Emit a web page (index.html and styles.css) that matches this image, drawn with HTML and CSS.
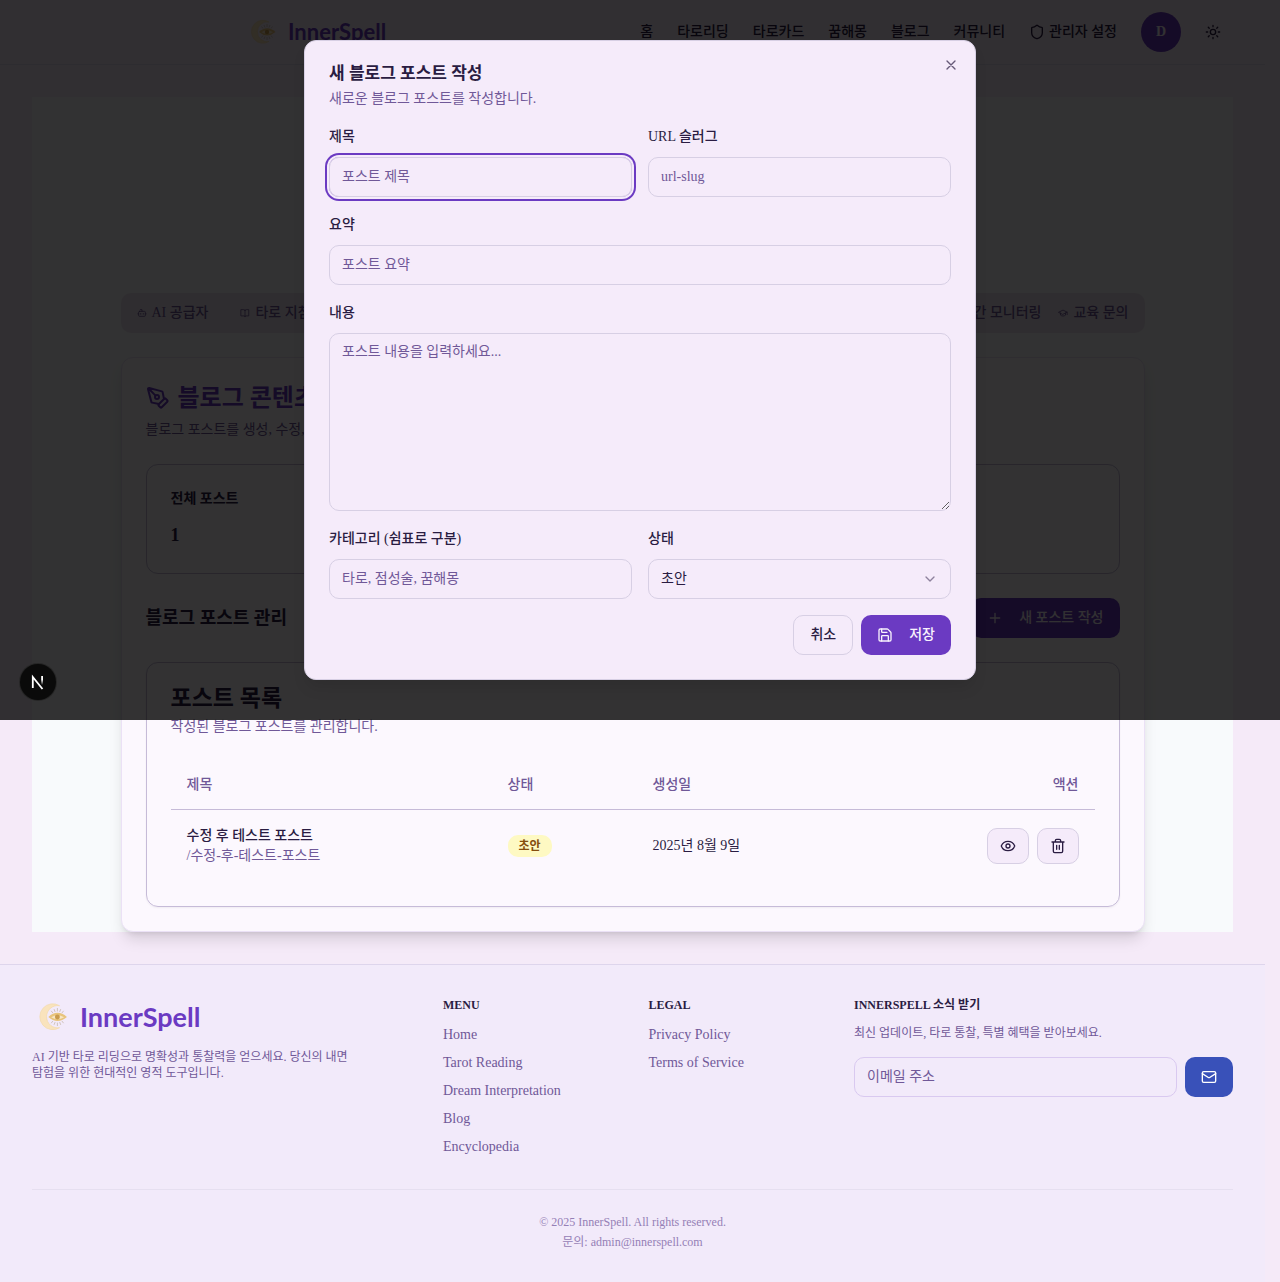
FILE: index.html
```html
<!DOCTYPE html>
<html lang="ko">
<head>
<meta charset="utf-8">
<meta name="viewport" content="width=device-width, initial-scale=1">
<title>InnerSpell</title>
<link rel="stylesheet" href="styles.css">
</head>
<body>
<svg class="defs" aria-hidden="true">
  <symbol id="logo" viewBox="0 0 32 32">
    <path d="M21 6A11.500 11.500 0 1 0 21 25.500A9.900 9.900 0 1 1 21 6Z" fill="#f9e3bd" stroke="#f3d9a8" stroke-width=".6"/>
    <path d="M19 8v3M16 9l1 2.500M22 9l-1 2.500M13.500 10.500l1.500 2M24.500 10.500l-1.500 2M19 21v3M16 23l1-2.500M22 23l-1-2.500M13.500 21.500l1.500-2M24.500 21.500l-1.500-2" stroke="#cdbfb4" stroke-width=".8" fill="none"/>
    <path d="M11 16Q19 8.500 27.500 16Q19 23 11 16Z" fill="#e8c47c"/>
    <path d="M13.500 16.200Q19 12.500 25 16.200Q19 19.500 13.500 16.200Z" fill="#f7e6c4"/>
    <circle cx="19" cy="16" r="2.200" fill="#c99b4d"/>
  </symbol>
</svg>

<header class="topbar">
  <a class="brand" href="#"><svg class="brand-mark" aria-hidden="true"><use href="#logo"/></svg><span>InnerSpell</span></a>
  <nav class="topnav">
    <a href="#">홈</a><a href="#">타로리딩</a><a href="#">타로카드</a><a href="#">꿈해몽</a><a href="#">블로그</a><a href="#">커뮤니티</a>
    <a href="#" class="with-icon"><svg class="icon" viewBox="0 0 24 24"><path d="M20 13c0 5-3.500 7.500-7.660 8.950a1 1 0 0 1-.67-.01C7.500 20.500 4 18 4 13V6a1 1 0 0 1 1-1c2 0 4.500-1.200 6.240-2.720a1.170 1.170 0 0 1 1.520 0C14.510 3.810 17 5 19 5a1 1 0 0 1 1 1z"/></svg>관리자 설정</a>
  </nav>
  <button class="avatar" type="button">D</button>
  <button class="theme" type="button" aria-label="테마"><svg class="icon" viewBox="0 0 24 24"><circle cx="12" cy="12" r="4"/><path d="M12 2v2M12 20v2M4.930 4.930l1.410 1.410M17.660 17.660l1.410 1.410M2 12h2M20 12h2M6.340 17.660l-1.410 1.410M19.070 4.930l-1.410 1.410"/></svg></button>
</header>

<main class="page">
  <div class="panel">
    <div class="inner">
      <div class="tabs">
        <div class="tab-group">
          <button type="button" class="tab"><svg class="icon tiny" viewBox="0 0 24 24"><path d="M12 8V4H8M2 14h2M20 14h2M15 13v2M9 13v2"/><rect x="4" y="8" width="16" height="12" rx="2"/></svg>AI 공급자</button>
          <button type="button" class="tab"><svg class="icon tiny" viewBox="0 0 24 24"><path d="M12 5v16M3 4h6a3 3 0 0 1 3 3 3 3 0 0 1 3-3h6v15h-7a2 2 0 0 0-2 2 2 2 0 0 0-2-2H3z"/></svg>타로 지침</button>
        </div>
        <div class="tab-group right">
          <button type="button" class="tab">실시간 모니터링</button>
          <button type="button" class="tab"><svg class="icon tiny" viewBox="0 0 24 24"><path d="M2 10l10-5 10 5-10 5zM22 10v6M6 12v5c3 3 9 3 12 0v-5"/></svg>교육 문의</button>
        </div>
      </div>

      <section class="card">
        <h1 class="card-title"><svg class="icon large" viewBox="0 0 24 24"><path d="M15.707 21.293a1 1 0 0 1-1.414 0l-1.586-1.586a1 1 0 0 1 0-1.414l5.586-5.586a1 1 0 0 1 1.414 0l1.586 1.586a1 1 0 0 1 0 1.414z"/><path d="m18 13-1.375-6.874a1 1 0 0 0-.746-.776L3.235 2.028a1 1 0 0 0-1.207 1.207L5.350 15.879a1 1 0 0 0 .776.746L13 18M2.300 2.300l7.286 7.286"/><circle cx="11" cy="11" r="2"/></svg>블로그 콘텐츠 관리</h1>
        <p class="muted">블로그 포스트를 생성, 수정, 삭제하고 관리합니다.</p>

        <div class="stat">
          <h2>전체 포스트</h2>
          <p>1</p>
        </div>

        <div class="toolbar">
          <h2>블로그 포스트 관리</h2>
          <button type="button" class="btn primary"><svg class="icon" viewBox="0 0 24 24"><path d="M5 12h14M12 5v14"/></svg>새 포스트 작성</button>
        </div>

        <div class="list">
          <h2>포스트 목록</h2>
          <p class="muted">작성된 블로그 포스트를 관리합니다.</p>
          <table>
            <thead><tr><th class="col-title">제목</th><th class="col-state">상태</th><th>생성일</th><th class="end">액션</th></tr></thead>
            <tbody><tr>
              <td><div class="post">수정 후 테스트 포스트</div><div class="slug">/수정-후-테스트-포스트</div></td>
              <td><span class="badge">초안</span></td>
              <td>2025년 8월 9일</td>
              <td><div class="actions">
                <button type="button" class="btn-icon" aria-label="보기"><svg class="icon" viewBox="0 0 24 24"><path d="M2.062 12.348a1 1 0 0 1 0-.696 10.750 10.750 0 0 1 19.876 0 1 1 0 0 1 0 .696 10.750 10.750 0 0 1-19.876 0"/><circle cx="12" cy="12" r="3"/></svg></button>
                <button type="button" class="btn-icon" aria-label="삭제"><svg class="icon" viewBox="0 0 24 24"><path d="M3 6h18M19 6v14a2 2 0 0 1-2 2H7a2 2 0 0 1-2-2V6M8 6V4a2 2 0 0 1 2-2h4a2 2 0 0 1 2 2v2M10 11v6M14 11v6"/></svg></button>
              </div></td>
            </tr></tbody>
          </table>
        </div>
      </section>
    </div>
  </div>
</main>

<footer class="footer">
  <div class="foot-grid">
    <div class="wide">
      <a class="brand big" href="#"><svg class="brand-mark" aria-hidden="true"><use href="#logo"/></svg><span>InnerSpell</span></a>
      <p class="about">AI 기반 타로 리딩으로 명확성과 통찰력을 얻으세요. 당신의 내면 탐험을 위한 현대적인 영적 도구입니다.</p>
    </div>
    <div>
      <h3>MENU</h3>
      <ul><li><a href="#">Home</a></li><li><a href="#">Tarot Reading</a></li><li><a href="#">Dream Interpretation</a></li><li><a href="#">Blog</a></li><li><a href="#">Encyclopedia</a></li></ul>
    </div>
    <div>
      <h3>LEGAL</h3>
      <ul><li><a href="#">Privacy Policy</a></li><li><a href="#">Terms of Service</a></li></ul>
    </div>
    <div class="wide">
      <h3>INNERSPELL 소식 받기</h3>
      <p class="small">최신 업데이트, 타로 통찰, 특별 혜택을 받아보세요.</p>
      <form class="subscribe">
        <input class="input" type="email" placeholder="이메일 주소" aria-label="이메일 주소">
        <button type="button" class="mail" aria-label="구독"><svg class="icon" viewBox="0 0 24 24"><rect x="2" y="4" width="20" height="16" rx="2"/><path d="m22 7-8.970 5.700a1.940 1.940 0 0 1-2.060 0L2 7"/></svg></button>
      </form>
    </div>
  </div>
  <div class="legal">
    <p>© 2025 InnerSpell. All rights reserved.</p>
    <p>문의: admin@innerspell.com</p>
  </div>
</footer>

<div class="overlay">
  <div class="modal" role="dialog" aria-labelledby="dlg-title">
    <button type="button" class="close" aria-label="닫기"><svg class="icon" viewBox="0 0 24 24"><path d="M18 6 6 18M6 6l12 12"/></svg></button>
    <h2 id="dlg-title">새 블로그 포스트 작성</h2>
    <p class="muted">새로운 블로그 포스트를 작성합니다.</p>
    <form class="form">
      <div class="row">
        <div class="field"><label for="f-title">제목</label><input class="input active" id="f-title" placeholder="포스트 제목"></div>
        <div class="field"><label for="f-slug">URL 슬러그</label><input class="input" id="f-slug" placeholder="url-slug"></div>
      </div>
      <div class="field"><label for="f-sum">요약</label><input class="input" id="f-sum" placeholder="포스트 요약"></div>
      <div class="field"><label for="f-body">내용</label><textarea class="input" id="f-body" rows="8" placeholder="포스트 내용을 입력하세요..."></textarea></div>
      <div class="row">
        <div class="field"><label for="f-cat">카테고리 (쉼표로 구분)</label><input class="input" id="f-cat" placeholder="타로, 점성술, 꿈해몽"></div>
        <div class="field"><label for="f-state">상태</label>
          <div class="select"><select class="input" id="f-state"><option>초안</option></select><svg class="icon" viewBox="0 0 24 24"><path d="m6 9 6 6 6-6"/></svg></div>
        </div>
      </div>
      <div class="form-actions">
        <button type="button" class="btn outline">취소</button>
        <button type="button" class="btn primary"><svg class="icon" viewBox="0 0 24 24"><path d="M15.200 3a2 2 0 0 1 1.400.6l3.800 3.800a2 2 0 0 1 .6 1.400V19a2 2 0 0 1-2 2H5a2 2 0 0 1-2-2V5a2 2 0 0 1 2-2z"/><path d="M17 21v-7a1 1 0 0 0-1-1H8a1 1 0 0 0-1 1v7M7 3v4a1 1 0 0 0 1 1h7"/></svg>저장</button>
      </div>
    </form>
  </div>
  <button type="button" class="devtools" aria-label="Next.js"><svg viewBox="0 0 36 36"><defs><linearGradient id="fade" x1="0" y1="0" x2="0" y2="1"><stop offset=".4" stop-color="#fff"/><stop offset="1" stop-color="#fff" stop-opacity="0"/></linearGradient></defs><path d="M12.800 24V13L22.500 25" fill="none" stroke="#fff" stroke-width="1.800"/><rect x="21.200" y="12" width="1.800" height="9" fill="url(#fade)"/></svg></button>
</div>
</body>
</html>
```
FILE: styles.css
```css
:root {
  --bg: #f5eaf8;
  --surface: #f5ebfa;
  --ink: #2a1c42;
  --muted: #705898;
  --purple: #6b3ac2;
  --line: #d7cfe4;
}
* { box-sizing: border-box; }
body {
  margin: 0;
  padding-right: 15px;
  position: relative;
  background: var(--bg);
  color: var(--ink);
  font: 14px/20px "Liberation Serif", "Noto Sans CJK KR", serif;
}
h1, h2, h3, p, ul { margin: 0; padding: 0; }
ul { list-style: none; }
a { color: inherit; text-decoration: none; }
button, input, select, textarea { font: inherit; color: inherit; }
button { padding: 0; border: 0; background: none; }
.defs { position: absolute; width: 0; height: 0; }
.icon {
  width: 16px; height: 16px; flex: none;
  fill: none; stroke: currentColor; stroke-width: 2;
  stroke-linecap: round; stroke-linejoin: round;
}
.icon.tiny { width: 10px; height: 10px; }
.icon.large { width: 24px; height: 24px; }
.muted { color: var(--muted); }

.topbar {
  display: flex; align-items: center;
  height: 65px; padding: 0 32px 0 248px;
  border-bottom: 1px solid #e2d9ee;
}
.brand {
  display: flex; align-items: center; gap: 8px;
  color: var(--purple);
  font: bold 22px/32px Lato, sans-serif;
}
.brand-mark { width: 32px; height: 32px; }
.brand.big { padding-left: 4px; font-size: 27px; line-height: 40px; }
.brand.big .brand-mark { width: 36px; height: 36px; }
.topnav { display: flex; gap: 24px; margin-left: auto; font-weight: 500; }
.with-icon { display: flex; align-items: center; gap: 4px; }
.avatar {
  width: 40px; height: 40px; margin-left: 24px;
  border-radius: 50%; background: var(--purple); color: #f8f2fd; font-weight: bold;
}
.theme { display: grid; place-items: center; width: 40px; height: 40px; margin-left: 12px; }

.page { padding: 32px; }
.panel { background: #f8fafc; padding-top: 196px; }
.inner { max-width: 1024px; margin: 0 auto; }
.tabs {
  display: flex; justify-content: space-between; align-items: center;
  height: 40px; padding: 0 16px; margin-bottom: 24px;
  border-radius: 10px; background: #ebe2f0; color: var(--muted); font-weight: 500;
}
.tab-group { display: flex; gap: 32px; }
.tab-group.right { gap: 17px; }
.tab { display: flex; align-items: center; gap: 5px; }

.card {
  padding: 24px; border: 1px solid #ebe1f6; border-radius: 12px;
  background: #fcf8fe;
  box-shadow: 0 10px 15px -3px rgba(0,0,0,.13), 0 4px 6px -4px rgba(0,0,0,.13);
}
.card-title {
  display: flex; align-items: center; gap: 8px; margin-bottom: 6px;
  color: var(--purple); font-size: 24px; line-height: 32px;
}
.stat {
  margin: 24px 0; padding: 24px;
  border: 1px solid #c6bbd8; border-radius: 12px;
}
.stat h2 { font-size: 14px; line-height: 20px; margin-bottom: 12px; }
.stat p { font-size: 18px; line-height: 28px; font-weight: bold; }
.toolbar { display: flex; justify-content: space-between; align-items: center; margin-bottom: 24px; }
.toolbar h2 { font-size: 18px; line-height: 28px; }
.btn {
  display: flex; align-items: center; gap: 16px;
  height: 40px; padding: 0 16px; border-radius: 10px; font-weight: 500;
}
.primary { background: var(--purple); color: #f8f2fd; }
.outline { border: 1px solid var(--line); }
.list {
  padding: 24px; border: 1px solid #c6bbd8; border-radius: 12px;
  box-shadow: 0 1px 2px rgba(0,0,0,.05);
}
.list h2 { font-size: 23px; line-height: 24px; margin-bottom: 6px; }
table { width: 100%; margin-top: 24px; table-layout: fixed; border-collapse: separate; border-spacing: 0; }
th { height: 49px; padding: 0 16px; text-align: left; font-weight: 500; color: var(--muted); border-bottom: 1px solid #c6bbd8; }
.col-title { width: 321px; }
.col-state { width: 145px; }
th.end { text-align: right; }
td { padding: 16px; }
.post { font-weight: 500; }
.slug { color: var(--muted); }
.badge {
  display: inline-block; padding: 2px 11px; border-radius: 10px;
  background: #fef9c3; color: #854d0e; font-size: 12px; line-height: 18px; font-weight: bold;
}
.actions { display: flex; justify-content: flex-end; gap: 8px; }
.btn-icon {
  display: grid; place-items: center; width: 42px; height: 36px;
  border: 1px solid var(--line); border-radius: 10px; background: var(--surface);
}

.footer { padding: 32px 32px 30px; border-top: 1px solid #ded5ec; background: #f2eafa; }
.foot-grid { display: grid; grid-template-columns: repeat(6, minmax(0, 1fr)); gap: 32px; }
.wide { grid-column: span 2; }
.footer h3 { font-size: 12px; line-height: 16px; margin-bottom: 12px; }
.footer li { margin-bottom: 8px; color: var(--muted); white-space: nowrap; }
.footer li:last-child { margin-bottom: 0; }
.about { max-width: 320px; margin-top: 12px; color: var(--muted); font-size: 12px; line-height: 16px; }
.small { color: var(--muted); font-size: 12px; line-height: 16px; }
.subscribe { display: flex; gap: 8px; margin-top: 16px; }
.subscribe .input { border-color: #d9c9f0; }
.mail { display: grid; place-items: center; flex: none; width: 48px; height: 40px; border-radius: 10px; background: #3951b9; color: #fff; }
.legal { margin-top: 32px; padding-top: 22px; border-top: 1px solid #e6dff0; text-align: center; font-size: 12px; color: #9580b6; }

.input {
  display: block; width: 100%; height: 40px; padding: 8px 12px;
  border: 1px solid var(--line); border-radius: 10px; background: transparent; outline: 0;
}
.input::placeholder { color: var(--muted); opacity: 1; }
textarea.input { height: auto; resize: vertical; }
.input.active { box-shadow: 0 0 0 2px var(--surface), 0 0 0 4px var(--purple); }

.overlay {
  position: absolute; top: 0; left: 0; right: 0; z-index: 10;
  padding: 40px; background: rgba(0,0,0,.8);
}
.modal {
  position: relative; max-width: 672px; margin: 0 auto; padding: 24px;
  border: 1px solid var(--line); border-radius: 12px; background: var(--surface);
  box-shadow: 0 10px 15px -3px rgba(0,0,0,.1);
}
.modal h2 { font-size: 17px; line-height: 18px; margin-bottom: 6px; }
.close { position: absolute; top: 16px; right: 16px; width: 16px; height: 16px; opacity: .7; }
.close .icon { display: block; }
.form { display: grid; gap: 16px; margin-top: 16px; }
.row { display: grid; grid-template-columns: 1fr 1fr; gap: 16px; }
.field label { display: block; margin-bottom: 8px; line-height: 24px; font-weight: 500; }
.select { position: relative; }
.select select { appearance: none; }
.select .icon { position: absolute; right: 13px; top: 12px; opacity: .5; pointer-events: none; }
.form-actions { display: flex; justify-content: flex-end; gap: 8px; }
.devtools {
  position: absolute; left: 20px; bottom: 20px; width: 36px; height: 36px;
  border-radius: 50%; background: #0a0a0a; box-shadow: 0 0 0 1px #262626;
}
.devtools svg { display: block; }
```
